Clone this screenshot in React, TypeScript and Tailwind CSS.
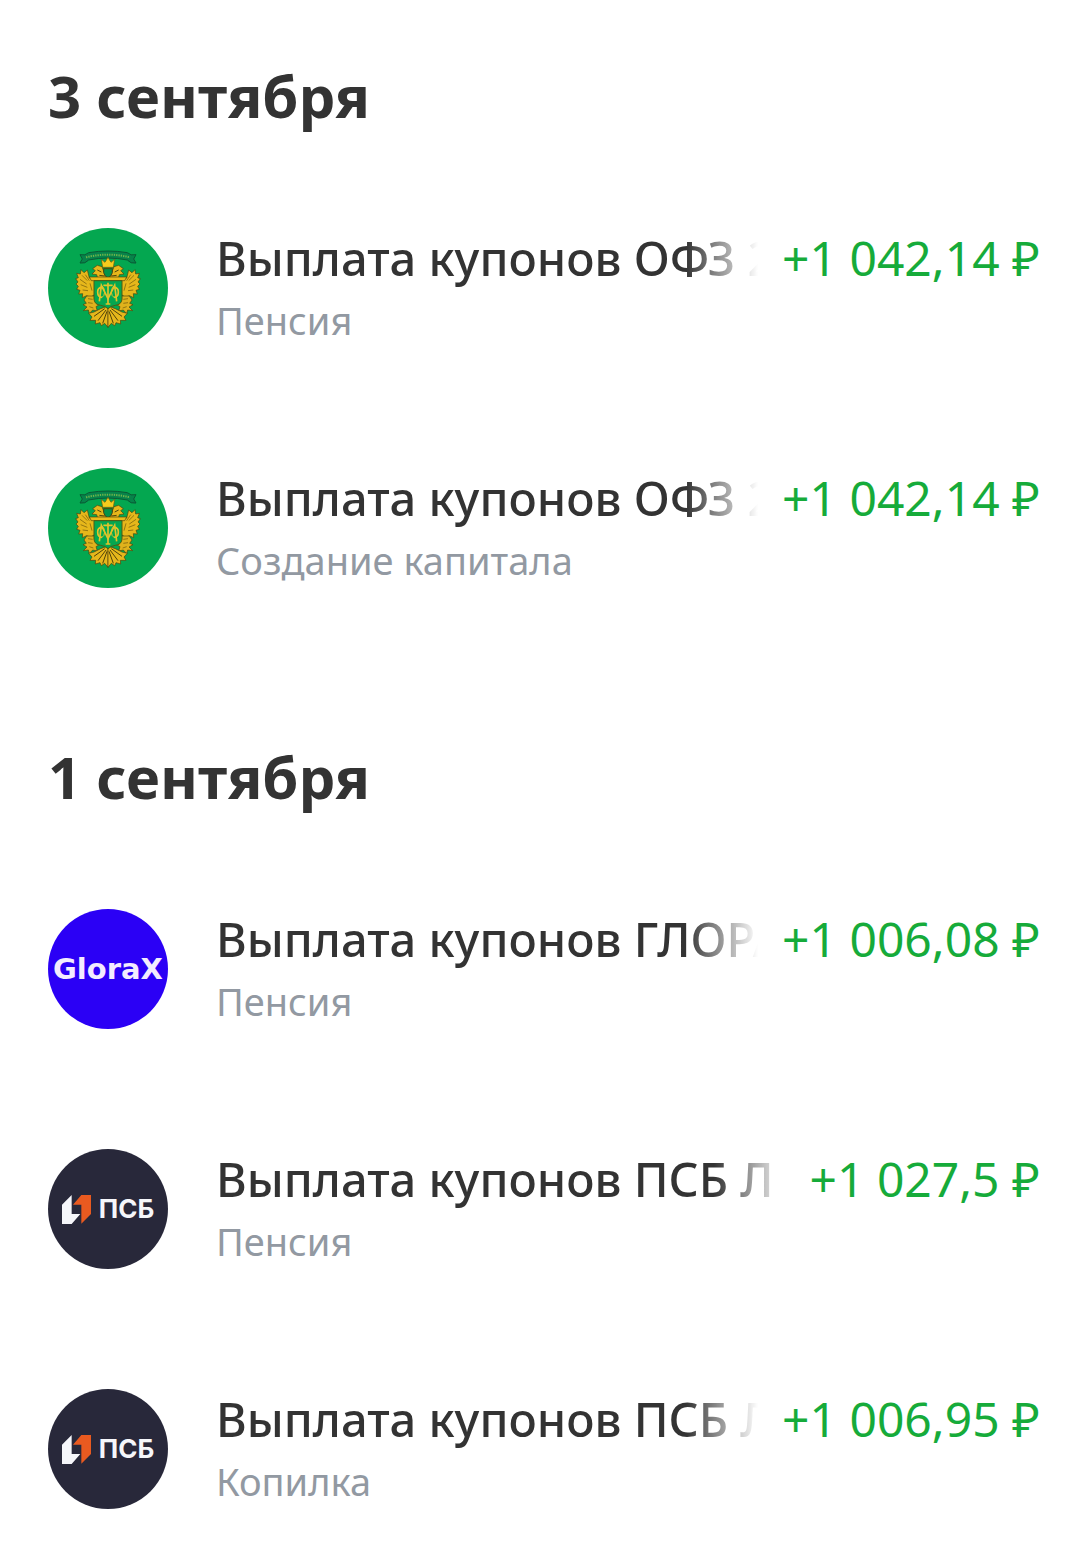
import type { ReactElement } from "react";

function EagleHalf() {
  return (
    <g stroke="#4f420c" strokeWidth="2" strokeLinejoin="round">
      {/* wing */}
      <path
        fill="#e6b71b"
        d="M142 154 L124 150 L118 126 L108 134 L99 125 L97 138 L86 136 L91 149 L83 152 L90 162 L84 168 L91 175 L86 184 L96 187 L92 198 L104 197 L103 209 L116 203 L128 208 L142 198 Z"
      />
      <path
        fill="none"
        stroke="#6b560c"
        d="M102 142 L118 158 M96 154 L116 168 M98 170 L118 178 M104 186 L120 188 M112 140 L124 158 M126 166 L132 188"
      />
      {/* head */}
      <path
        fill="#e6b71b"
        d="M176 154 L150 154 L146 140 L132 138 L142 128 L134 122 L148 112 L162 116 L168 132 L178 138 Z"
      />
      <path fill="none" strokeWidth="3" d="M148 126 L160 132 M154 142 L170 144" />
      {/* leg and claw */}
      <path
        fill="#e0b21c"
        d="M142 204 L116 204 L108 216 L115 226 L105 230 L117 237 L106 248 L121 246 L124 257 L134 246 L148 249 L144 236 L154 230 L142 222 Z"
      />
      <path fill="none" stroke="#6b560c" d="M120 212 L134 214 M120 224 L134 226 M124 236 L136 240" />
      {/* tail feathers */}
      <path
        fill="#e6b71b"
        d="M180 234 L158 242 L138 252 L122 256 L132 267 L126 277 L143 277 L142 288 L156 284 L160 293 L170 286 L180 298 Z"
      />
      <path
        fill="none"
        strokeWidth="3"
        d="M170 242 L138 265 M174 246 L150 278 M177 250 L164 286"
      />
    </g>
  );
}

function MinistryLogo() {
  return (
    <svg viewBox="0 0 360 360" className="size-full" aria-hidden="true">
      <rect width="360" height="360" fill="#04a750" />
      <EagleHalf />
      <g transform="matrix(-1 0 0 1 360 0)">
        <EagleHalf />
      </g>
      {/* ribbon */}
      <path
        fill="#07834a"
        stroke="#0b5a35"
        strokeWidth="3"
        strokeLinejoin="round"
        d="M96 80 Q112 84 122 74 Q180 64 238 74 Q248 84 264 80 L257 93 L264 105 Q248 108 238 96 Q180 84 122 96 Q112 108 96 105 L103 93 Z"
      />
      <path d="M114 88 Q180 72 246 88" fill="none" stroke="#6fb54a" strokeWidth="6" strokeDasharray="4 3" />
      {/* crown */}
      <path
        fill="#f5cb1e"
        stroke="#6b560c"
        strokeWidth="2"
        strokeLinejoin="round"
        d="M164 118 L160 94 L171 103 L180 88 L189 103 L200 94 L196 118 Z"
      />
      {/* breast shield */}
      <path fill="#04934a" stroke="#4f420c" strokeWidth="3" d="M167 122 H193 V134 Q190 146 180 150 Q170 146 167 134 Z" />
      {/* main shield */}
      <path fill="#e9bb1c" stroke="#4f420c" strokeWidth="2" d="M124 147 H236 L230 158 H130 Z" />
      <path
        fill="#04a750"
        stroke="#4f5a12"
        strokeWidth="3"
        d="M138 158 H222 V214 Q220 230 202 232 Q188 234 180 242 Q172 234 158 232 Q140 230 138 214 Z"
      />
      {/* monogram */}
      <g fill="none" stroke="#e2c32a" strokeWidth="5">
        <path d="M154 220 L160 172 L180 212 L200 172 L206 220" />
        <path d="M166 172 H194 M180 164 V228 M173 228 H187" />
        <path d="M162 178 Q149 178 149 192 Q149 208 162 208 M198 178 Q211 178 211 192 Q211 208 198 208" />
        <path d="M160 172 Q170 180 170 192 Q170 204 160 210 M200 172 Q190 180 190 192 Q190 204 200 210" strokeWidth="3" />
      </g>
    </svg>
  );
}

function GloraxLogo() {
  return (
    <span className="flex size-full items-center justify-center bg-[#2b00f5] font-['DejaVu_Sans',sans-serif] text-[29px] leading-none font-bold text-[#f3ecff]">
      GloraX
    </span>
  );
}

function PsbLogo() {
  return (
    <span className="flex size-full items-center justify-center gap-2 bg-[#28283a] font-['Inter',sans-serif] text-[26px] leading-none font-bold text-[#f5f6fa]">
      <svg viewBox="0 0 87 87" className="size-[29px] shrink-0" aria-hidden="true">
        <path fill="#f5f6fa" d="M0 29 L29 0 V57 H55 L29 87 H0 Z" />
        <path fill="#e95a20" d="M33 29 L58 0 H87 V57 L58 86 V29 Z" />
      </svg>
      ПСБ
    </span>
  );
}

type Operation = {
  id: number;
  logo: () => ReactElement;
  title: string;
  account: string;
  amount: string;
};

const days: { date: string; operations: Operation[] }[] = [
  {
    date: "3 сентября",
    operations: [
      { id: 1, logo: MinistryLogo, title: "Выплата купонов ОФЗ 2", account: "Пенсия", amount: "+1 042,14 ₽" },
      { id: 2, logo: MinistryLogo, title: "Выплата купонов ОФЗ 2", account: "Создание капитала", amount: "+1 042,14 ₽" },
    ],
  },
  {
    date: "1 сентября",
    operations: [
      { id: 3, logo: GloraxLogo, title: "Выплата купонов ГЛОРА", account: "Пенсия", amount: "+1 006,08 ₽" },
      { id: 4, logo: PsbLogo, title: "Выплата купонов ПСБ Л", account: "Пенсия", amount: "+1 027,5 ₽" },
      { id: 5, logo: PsbLogo, title: "Выплата купонов ПСБ Л", account: "Копилка", amount: "+1 006,95 ₽" },
    ],
  },
];

function OperationRow({ logo: Logo, title, account, amount }: Operation) {
  return (
    <li className="flex gap-12">
      <div className="size-[120px] shrink-0 overflow-hidden rounded-full">
        <Logo />
      </div>
      <div className="min-w-0 flex-1">
        <div className="flex gap-6 leading-[60px]">
          <p className="min-w-0 flex-1 overflow-hidden text-[47px] font-medium whitespace-nowrap text-[#333333] [mask-image:linear-gradient(to_left,transparent,black_72px)]">
            {title}
          </p>
          <p className="shrink-0 text-[48px] whitespace-nowrap text-[#16ab3a]">{amount}</p>
        </div>
        <p className="text-[38px] leading-[64px] text-[#9299a2]">{account}</p>
      </div>
    </li>
  );
}

export default function App() {
  return (
    <main className="flex flex-col gap-[149px] bg-white pt-[60px] pr-11 pb-11 pl-12 font-['Noto_Sans',sans-serif]">
      {days.map((day) => (
        <section key={day.date}>
          <h2 className="text-[58px] leading-[72px] font-bold text-[#333333]">{day.date}</h2>
          <ul className="mt-24 flex flex-col gap-[116px]">
            {day.operations.map((operation) => (
              <OperationRow key={operation.id} {...operation} />
            ))}
          </ul>
        </section>
      ))}
    </main>
  );
}
